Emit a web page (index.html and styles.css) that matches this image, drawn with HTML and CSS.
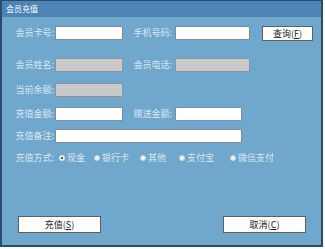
FILE: index.html
```html
<!DOCTYPE html>
<html lang="zh-CN">
<head>
    <meta charset="UTF-8">
    <meta name="viewport" content="width=device-width, initial-scale=1.0">
    <title>会员充值</title>
    <link rel="stylesheet" href="styles.css">
</head>
<body>
    <div class="window">
        <div class="titlebar">会员充值</div>

        <div class="content">
            <div class="row row-card">
                <span class="lbl">会员卡号:</span>
                <input class="box w68" type="text">
                <span class="lbl2">手机号码:</span>
                <input class="box w75" type="text">
                <button class="btn-query">查询(<u>F</u>)</button>
            </div>

            <div class="row row-name">
                <span class="lbl">会员姓名:</span>
                <input class="box w68 readonly" type="text" readonly>
                <span class="lbl2">会员电话:</span>
                <input class="box w75 readonly" type="text" readonly>
            </div>

            <div class="row row-balance">
                <span class="lbl">当前余额:</span>
                <input class="box w68 readonly" type="text" readonly>
            </div>

            <div class="row row-amount">
                <span class="lbl">充值金额:</span>
                <input class="box w68" type="text">
                <span class="lbl2">赠送金额:</span>
                <input class="box w67" type="text">
            </div>

            <div class="row row-note">
                <span class="lbl">充值备注:</span>
                <input class="box w187" type="text">
            </div>

            <div class="row row-pay">
                <span class="lbl">充值方式:</span>
                <div class="options">
                    <label class="opt checked"><span class="dot"></span>现金</label>
                    <label class="opt"><span class="dot"></span>银行卡</label>
                    <label class="opt"><span class="dot"></span>其他</label>
                    <label class="opt"><span class="dot"></span>支付宝</label>
                    <label class="opt"><span class="dot"></span>微信支付</label>
                </div>
            </div>

            <div class="actions">
                <button class="btn">充值(<u>S</u>)</button>
                <button class="btn">取消(<u>C</u>)</button>
            </div>
        </div>
    </div>
</body>
</html>
```

FILE: styles.css
```css
body {
    margin: 0;
    padding: 0;
    font-family: "Noto Sans CJK SC", "Noto Sans", sans-serif;
    font-size: 9px;
    background-color: #ffffff;
}

.window {
    width: 319px;
    height: 244px;
    border: 2px solid #2d4c6c;
    border-top-width: 1px;
    background-color: #6fa7cd;
    display: flex;
    flex-direction: column;
}

.titlebar {
    height: 16px;
    line-height: 15px;
    padding-left: 4px;
    background-color: #4c84b6;
    color: #ffffff;
    font-size: 8px;
}

.content {
    flex: 1;
    display: flex;
    flex-direction: column;
}

.row {
    display: flex;
    align-items: center;
    height: 14px;
}

.row-card {
    margin-top: 9px;
}

.row-name {
    margin-top: 18px;
}

.row-balance {
    margin-top: 11px;
}

.row-amount {
    margin-top: 10px;
}

.row-note {
    margin-top: 8px;
}

.row-pay {
    margin-top: 8px;
}

.lbl,
.lbl2 {
    color: #dde8f1;
    text-align: right;
    line-height: 14px;
}

.lbl {
    width: 52px;
    margin-right: 1px;
}

.lbl2 {
    width: 49px;
    margin-right: 3px;
}

.box {
    box-sizing: border-box;
    height: 14px;
    margin: 0;
    padding: 0 2px;
    border: 1px solid #7d8e9d;
    background-color: #ffffff;
    font: inherit;
}

.box.readonly {
    background-color: #c9c9c9;
    border-color: #8796a4;
}

.w68 { width: 68px; }
.w75 { width: 75px; }
.w67 { width: 67px; }
.w187 { width: 187px; }

.btn-query {
    box-sizing: border-box;
    width: 51px;
    height: 15px;
    margin-left: 12px;
    padding: 0;
    border: 1px solid #5f5f5f;
    background-color: #ffffff;
    color: #222222;
    font: inherit;
}

.options {
    display: flex;
    align-items: center;
    margin-left: 4px;
}

.opt {
    display: flex;
    align-items: center;
    color: #dde8f1;
    line-height: 14px;
}

.opt:nth-child(1) { width: 35px; }
.opt:nth-child(2) { width: 46px; }
.opt:nth-child(3) { width: 39px; }
.opt:nth-child(4) { width: 51px; }

.dot {
    box-sizing: border-box;
    width: 6px;
    height: 6px;
    margin-right: 2px;
    border-radius: 50%;
    border: 1px solid #c9d3dc;
    background-color: #f2f2f2;
}

.opt.checked .dot {
    border-color: #e8eef3;
    background: radial-gradient(circle, #2b5d8c 45%, #ffffff 55%);
}

.actions {
    display: flex;
    justify-content: space-between;
    margin-top: auto;
    margin-bottom: 12px;
    padding: 0 15px 0 16px;
}

.btn {
    box-sizing: border-box;
    width: 83px;
    height: 17px;
    padding: 0;
    border: 1px solid #5f5f5f;
    background-color: #ffffff;
    color: #222222;
    font: inherit;
}
```
